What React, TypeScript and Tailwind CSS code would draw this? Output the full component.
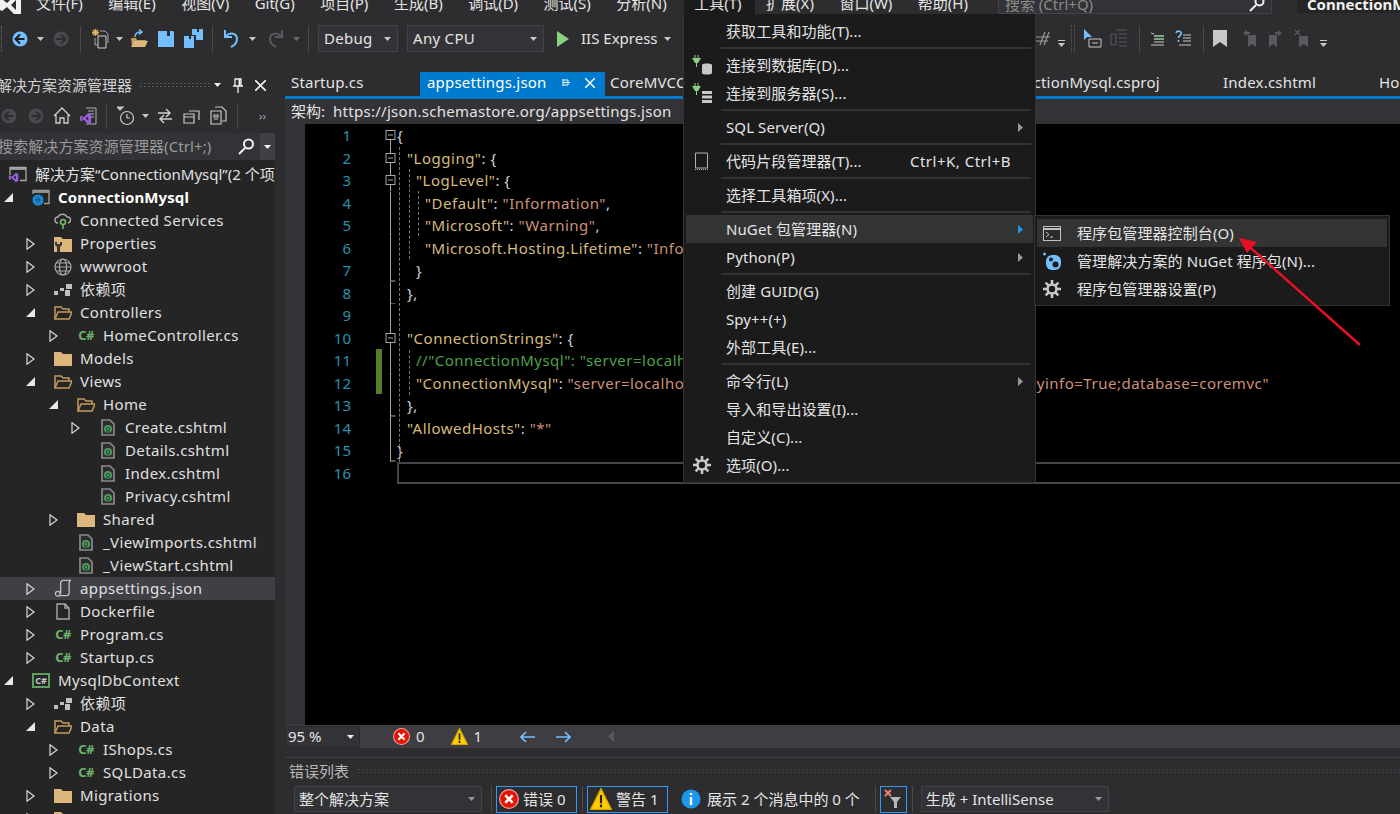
import React from "react";

const Caret = ({ c = "#c8c8c8", className = "" }: { c?: string; className?: string }) => (
  <svg width="7" height="4" viewBox="0 0 7 4" className={className}><path d="M0 0h7L3.5 4z" fill={c} /></svg>
);

const Circle = ({ dir, on }: { dir: "l" | "r"; on: boolean }) => (
  <svg width="16" height="16" viewBox="0 0 16 16">
    <circle cx="8" cy="8" r="7.5" fill={on ? "#75beff" : "#4a4a4e"} />
    <path d={dir === "l" ? "M8 3.5 3.5 8 8 12.5M4 8h8.5" : "M8 3.5 12.5 8 8 12.5M12 8H3.5"} stroke={on ? "#1e1e1e" : "#2d2d30"} strokeWidth="2" fill="none" />
  </svg>
);

const Sep = ({ className = "" }: { className?: string }) => <div className={"w-px h-[26px] bg-[#4a4a4e] shrink-0 " + className} />;

const BarCaret = ({ className = "" }: { className?: string }) => (
  <div className={"flex flex-col items-center gap-[2px] mt-[10px] shrink-0 " + className}><div className="w-[7px] h-px bg-[#c8c8c8]" /><Caret /></div>
);

const MainToolbar = () => (
  <div className="h-[58px] flex items-center pb-[9px] text-[15px] text-[#e4e4e4]">
    <div className="ml-px w-px h-[26px] border-l border-dotted border-[#6a6a6e]" />
    <div className="ml-[10px]"><Circle dir="l" on /></div>
    <Caret className="ml-[9px]" />
    <div className="ml-[9px]"><Circle dir="r" on={false} /></div>
    <Sep className="ml-[11px]" />
    <svg className="ml-[10px]" width="18" height="20" viewBox="0 0 18 20" fill="none">
      <path d="M7 7h8v12H7z" stroke="#d0d0d0" /><path d="M4 9v7h3M9 2h5l3 3v9" stroke="#a8a8a8" />
      <path d="M4.500 0v7M1 3.500h7M2 1l5 5M7 1 2 6" stroke="#e8b75d" strokeWidth="1.300" />
    </svg>
    <Caret className="ml-[7px]" />
    <svg className="ml-[7px]" width="18" height="20" viewBox="0 0 18 20">
      <path d="M1 9h5l1 2h9v1H5l-2 5h-1z" fill="#c49a5c" /><path d="M1 18l3-6h14l-3 6z" fill="#dcb67a" /><path d="M5 8c0-4 3-5 6-5M9 0.500l3 2.500-3 2.500" stroke="#75beff" strokeWidth="1.500" fill="none" />
    </svg>
    <svg className="ml-[10px]" width="16" height="16" viewBox="0 0 16 16"><path d="M0 0h15l1 1v15H0zM9 0v5h3V0z" fill="#75beff" fillRule="evenodd" /></svg>
    <svg className="ml-[10px]" width="19" height="19" viewBox="0 0 19 19" fill="#75beff" fillRule="evenodd"><path d="M0 7h10v12H0zM5 7v3h2V7z" /><path d="M8 0h11v11h-7V6H8zM13 0v3h2V0z" /></svg>
    <Sep className="ml-[9px]" />
    <svg className="ml-[10px]" width="17" height="20" viewBox="0 0 17 20" fill="none"><path d="M2 1v7h7" stroke="#75beff" strokeWidth="2" /><path d="M3 7c4-4 11-3 11 3 0 4-4 7-6 8" stroke="#75beff" strokeWidth="2" /></svg>
    <Caret className="ml-[9px]" />
    <svg className="ml-[11px]" width="17" height="20" viewBox="0 0 17 20" fill="none"><path d="M15 1v7H8" stroke="#5a5a5e" strokeWidth="2" /><path d="M14 7c-4-4-11-3-11 3 0 4 4 7 6 8" stroke="#5a5a5e" strokeWidth="2" /></svg>
    <Caret c="#6a6a6e" className="ml-[9px]" />
    <Sep className="ml-[8px]" />
    <div className="ml-[9px] w-[80px] h-[27px] bg-[#333337] border border-[#434346] flex items-center pl-[5px] tracking-[0.3px] shrink-0">
      Debug<Caret className="ml-auto mr-[6px]" />
    </div>
    <div className="ml-[9px] w-[137px] h-[27px] bg-[#333337] border border-[#434346] flex items-center pl-[5px] tracking-[0.3px] shrink-0">
      Any CPU<Caret className="ml-auto mr-[6px]" />
    </div>
    <svg className="ml-[13px]" width="12" height="16" viewBox="0 0 12 16"><path d="M0 0l12 8-12 8z" fill="#89d185" /></svg>
    <span className="ml-[12px] whitespace-nowrap">IIS Express</span>
    <Caret className="ml-[6px]" />
    <div className="w-[365px] shrink-0" />
    <svg className="shrink-0" width="14" height="18" viewBox="0 0 14 18" fill="none"><path d="M4 15 9 2M8 15l5-13M0 7h14M0 11h12" stroke="#9a9a9a" strokeWidth="1.200" /></svg>
    <BarCaret className="ml-[8px]" />
    <div className="ml-[6px] h-[28px] w-[4px] border-x border-dotted border-[#5a5a5e] shrink-0" />
    <svg className="ml-[9px] shrink-0" width="18" height="20" viewBox="0 0 18 20" fill="none"><path d="M0 0v11l3-3h5z" fill="#75beff" /><path d="M5 10h12v8H5zM8 14h6" stroke="#c8c8c8" /></svg>
    <svg className="ml-[8px] shrink-0" width="18" height="20" viewBox="0 0 18 20" fill="none" stroke="#5a5a5e"><path d="M1 5h5v11H1zM6 1h11M9 5h8M9 9h8M9 13h8M9 17h8" /></svg>
    <Sep className="ml-[11px]" />
    <svg className="ml-[11px] shrink-0" width="14" height="14" viewBox="0 0 14 14" stroke="#c8c8c8"><path d="M0 1l3 1M3 4h10M3 7h10M3 10h10M0 13h13" /><path d="M3 4h10M3 7h10" stroke="#89d185" /></svg>
    <svg className="ml-[10px] shrink-0" width="16" height="18" viewBox="0 0 16 18" fill="none"><path d="M1 3c1-3 6-2 5 1-.5 2-2.500 2-2.500 4M3.500 10v2" stroke="#75beff" strokeWidth="1.600" /><path d="M8 5h8M8 8h8M8 11h8M4 15h12" stroke="#c8c8c8" /></svg>
    <Sep className="ml-[12px]" />
    <svg className="ml-[9px] shrink-0" width="14" height="17" viewBox="0 0 14 17"><path d="M0 0h14v17l-7-5-7 5z" fill="#c8c8c8" /></svg>
    <svg className="ml-[16px] shrink-0" width="14" height="17" viewBox="0 0 14 17"><path d="M5 5h8v12l-4-3-4 3zM0 3l4-3v2h3v2H4v2z" fill="#5a5a5e" /></svg>
    <svg className="ml-[11px] shrink-0" width="14" height="17" viewBox="0 0 14 17"><path d="M1 5h8v12l-4-3-4 3zM14 3l-4-3v2H7v2h3v2z" fill="#5a5a5e" /></svg>
    <svg className="ml-[13px] shrink-0" width="14" height="17" viewBox="0 0 14 17"><path d="M4 6h9v11l-4-3-5 3z" fill="#5a5a5e" /><path d="M0 0l5 5M5 0 0 5" stroke="#7a7a7e" /></svg>
    <BarCaret className="ml-[11px]" />
  </div>
);

const VSMark = ({ size = 14 }: { size?: number }) => (
  <svg width={size} height={size} viewBox="0 0 14 14">
    <path d="M10 1 5 6 2.5 4 1 5v4l1.5 1L5 8l5 5 3-1.500V2.500zM10 4.500v5L7 7zM2.500 6l1.500 1-1.500 1z" fill="#9b5fe0" fillRule="evenodd" />
  </svg>
);

const MenuBar = () => (
  <div className="h-[14px] overflow-hidden flex relative">
    <svg className="absolute left-0 -top-[6px]" width="22" height="22" viewBox="0 0 22 22"><path d="M16 0 7 9 2 5 0 6v10l2 1 5-4 9 9 5-2V2zM16 6v10l-5-5z" fill="#f1f1f1" fillRule="evenodd" /></svg>
    <div className="h-[20px] -mt-[7px] ml-[36px] flex items-center gap-[25.5px] text-[15px] text-[#e4e4e4] whitespace-nowrap">
      <span>文件(F)</span><span>编辑(E)</span><span>视图(V)</span><span>Git(G)</span><span>项目(P)</span><span>生成(B)</span><span>调试(D)</span><span>测试(S)</span><span>分析(N)</span>
      <span className="relative bg-[#1b1b1c] pl-[10px] pr-[13px] -ml-[8px] -mr-[14px] h-[21px] leading-[20px] z-10">工具(T)</span>
      <span>扩展(X)</span><span>窗口(W)</span><span>帮助(H)</span>
    </div>
    <div className="ml-[30px] w-[274px] h-[20px] -mt-[6px] bg-[#333337] border border-[#434346] flex items-center pl-[6px] text-[15px] text-[#8a8a8a] shrink-0">
      搜索 (Ctrl+Q)
      <svg className="ml-auto mr-[6px]" width="16" height="16" viewBox="0 0 16 16" fill="none" stroke="#f1f1f1" strokeWidth="2"><circle cx="10.500" cy="5.500" r="4" /><path d="M7 9l-6 6" /></svg>
    </div>
    <div className="ml-[25px] flex-1 h-[20px] -mt-[7px] bg-[#252526] pl-[10px] font-bold text-[15px] text-[#f1f1f1] whitespace-nowrap overflow-hidden">ConnectionMysql</div>
  </div>
);

const CollapsedCh = () => <svg width="9" height="12" viewBox="0 0 9 12"><path d="M1 .8 8 6l-7 5.200z" fill="none" stroke="#d8d8d8" strokeWidth="1.200" /></svg>;
const OpenCh = () => <svg width="9" height="9" viewBox="0 0 9 9"><path d="M9 0v9H0z" fill="#e8e8e8" /></svg>;

const FolderC = () => <svg width="18" height="15" viewBox="0 0 18 15"><path d="M0 1h7l2 2h9v12H0z" fill="#dcb67a" /></svg>;
const FolderO = () => <svg width="18" height="15" viewBox="0 0 18 15" fill="none"><path d="M1 14V2h6l2 2h6v3" stroke="#c49a5c" strokeWidth="1.500" /><path d="M1 14 4 7h14l-3 7z" fill="#252526" stroke="#c49a5c" strokeWidth="1.500" /></svg>;
const CS = () => <span className="text-[13px] leading-none font-bold text-[#6db36d] whitespace-nowrap -tracking-[0.5px]">C#</span>;
const Razor = () => (
  <svg width="14" height="17" viewBox="0 0 14 17" fill="none">
    <path d="M1 1h8l4 4v11H1z" fill="#2d2d30" stroke="#8a8a8a" strokeWidth="1.700" />
    <circle cx="7" cy="10" r="4" fill="#4f9a5f" />
    <circle cx="7" cy="10" r="1.700" stroke="#1e4d2b" />
    <path d="M9 13h-4" stroke="#1e4d2b" />
  </svg>
);
const Deps = () => <svg width="18" height="12" viewBox="0 0 18 12" fill="#c0c0c0"><path d="M0 7h4v4H0zM6 4h4v3H6zM12 0h6v5h-6zM11 6h5v6h-5z" /></svg>;
const Globe = () => <svg width="18" height="18" viewBox="0 0 18 18" fill="none" stroke="#a8a8a8" strokeWidth="1.200"><circle cx="9" cy="9" r="8" /><ellipse cx="9" cy="9" rx="3.500" ry="8" /><path d="M1 9h16M2 5h14M2 13h14" /></svg>;
const Cloud = () => <svg width="18" height="18" viewBox="0 0 18 18" fill="none"><path d="M4 11a3 3 0 0 1 0-6 5 5 0 0 1 9 0 3 3 0 0 1 1 6" stroke="#a8a8a8" strokeWidth="1.400" /><circle cx="9" cy="10" r="2.500" stroke="#7cba6e" strokeWidth="1.500" /><path d="M9 12v5" stroke="#7cba6e" strokeWidth="1.500" /></svg>;
const Props = () => <svg width="18" height="16" viewBox="0 0 18 16"><path d="M0 1h7l2 2h9v13H0z" fill="#dcb67a" /><path d="M1 6h7v3L6 11v5H3v-5L1 9z" fill="#3a3a3a" /><path d="M3 5h3v3H3z" fill="#dcb67a" /></svg>;
const Json = () => <svg width="19" height="19" viewBox="0 0 19 19" fill="none" stroke="#c0c0c0" strokeWidth="1.400"><path d="M7 15V4c0-2 1-3 3-3h8c-1.500 0-2 1-2 3v10c0 2-1 3-3 3H6" /><circle cx="4" cy="15" r="2.500" /></svg>;
const Doc = () => <svg width="14" height="17" viewBox="0 0 14 17" fill="none" stroke="#a8a8a8" strokeWidth="1.400"><path d="M1 1h8l4 4v11H1zM9 1v4h4" /></svg>;
const Proj = () => (
  <svg width="18" height="17" viewBox="0 0 18 17" fill="none"><path d="M1 5V1.500h16v13h-5" stroke="#9a9a9a" strokeWidth="1.400" /><path d="M1 3h16" stroke="#9a9a9a" strokeWidth="1.800" /><circle cx="6" cy="11" r="5.500" fill="#1c97ea" /><path d="M1 11h10M6 6v10M3 7c2 2 2 6 0 8M9 7c-2 2-2 6 0 8" stroke="#14507f" strokeWidth=".8" /></svg>
);
const Sln = () => (
  <div className="relative w-[18px] h-[17px]">
    <svg width="18" height="17" viewBox="0 0 18 17" fill="none" className="absolute inset-0"><path d="M1 9V1.500h16v13h-6" stroke="#a8a8a8" strokeWidth="1.300" /><path d="M1 3h16" stroke="#a8a8a8" strokeWidth="1.800" /></svg>
    <div className="absolute -left-[1px] top-[6px]"><VSMark size={11} /></div>
  </div>
);
const CsProj = () => <div className="w-[18px] h-[15px] border-2 border-[#5e9e5e] flex items-center justify-center text-[9px] font-bold leading-none text-[#c8c8c8]">C#</div>;

type Row = { t: string; l: number; ch?: "c" | "o"; i: React.ReactNode; bold?: boolean; sel?: boolean };

const rows: Row[] = [
  { t: "ConnectionMysql", l: 0, ch: "o", i: <Proj />, bold: true },
  { t: "Connected Services", l: 1, i: <Cloud /> },
  { t: "Properties", l: 1, ch: "c", i: <Props /> },
  { t: "wwwroot", l: 1, ch: "c", i: <Globe /> },
  { t: "依赖项", l: 1, ch: "c", i: <Deps /> },
  { t: "Controllers", l: 1, ch: "o", i: <FolderO /> },
  { t: "HomeController.cs", l: 2, ch: "c", i: <CS /> },
  { t: "Models", l: 1, ch: "c", i: <FolderC /> },
  { t: "Views", l: 1, ch: "o", i: <FolderO /> },
  { t: "Home", l: 2, ch: "o", i: <FolderO /> },
  { t: "Create.cshtml", l: 3, ch: "c", i: <Razor /> },
  { t: "Details.cshtml", l: 3, i: <Razor /> },
  { t: "Index.cshtml", l: 3, i: <Razor /> },
  { t: "Privacy.cshtml", l: 3, i: <Razor /> },
  { t: "Shared", l: 2, ch: "c", i: <FolderC /> },
  { t: "_ViewImports.cshtml", l: 2, i: <Razor /> },
  { t: "_ViewStart.cshtml", l: 2, i: <Razor /> },
  { t: "appsettings.json", l: 1, ch: "c", i: <Json />, sel: true },
  { t: "Dockerfile", l: 1, ch: "c", i: <Doc /> },
  { t: "Program.cs", l: 1, ch: "c", i: <CS /> },
  { t: "Startup.cs", l: 1, ch: "c", i: <CS /> },
  { t: "MysqlDbContext", l: 0, ch: "o", i: <CsProj /> },
  { t: "依赖项", l: 1, ch: "c", i: <Deps /> },
  { t: "Data", l: 1, ch: "o", i: <FolderO /> },
  { t: "IShops.cs", l: 2, ch: "c", i: <CS /> },
  { t: "SQLData.cs", l: 2, ch: "c", i: <CS /> },
  { t: "Migrations", l: 1, ch: "c", i: <FolderC /> },
  { t: "CoreMVC", l: 1, ch: "c", i: <FolderC /> },
];

const indent = ["pl-0", "pl-[22px]", "pl-[45px]", "pl-[67px]"];

const Explorer = () => (
  <div className="w-[275px] shrink-0 flex flex-col overflow-hidden">
    <div className="h-[26px] flex items-center text-[15px] text-[#d0d0d0] shrink-0">
      <span className="-ml-[3px] whitespace-nowrap">解决方案资源管理器</span>
      <div className="ml-[7px] w-[72px] h-[6px] bg-[radial-gradient(#55555a_1px,transparent_1px)] bg-[length:4px_3px]" />
      <Caret c="#f1f1f1" className="ml-[3px]" />
      <svg className="ml-[12px]" width="10" height="15" viewBox="0 0 10 15" fill="none" stroke="#f1f1f1" strokeWidth="1.300"><path d="M2 1h6v7H2zM0 8h10M5 8v7" /><path d="M6.500 1v7" strokeWidth="2" /></svg>
      <svg className="ml-[12px]" width="11" height="11" viewBox="0 0 11 11" stroke="#f1f1f1" strokeWidth="1.600"><path d="M0 0l11 11M11 0 0 11" /></svg>
    </div>
    <div className="h-[35px] flex items-center shrink-0">
      <div className="ml-[1px]"><Circle dir="l" on={false} /></div>
      <div className="ml-[11px]"><Circle dir="r" on={false} /></div>
      <svg className="ml-[9px]" width="18" height="17" viewBox="0 0 18 17" fill="none" stroke="#d0d0d0" strokeWidth="1.300"><path d="M1 9l8-8 8 8M3 8v8h4v-5h4v5h4V8" /></svg>
      <div className="ml-[8px] relative w-[18px] h-[18px]">
        <svg width="18" height="18" viewBox="0 0 18 18" fill="none" stroke="#b0b0b0" className="absolute inset-0"><path d="M7 1h10v16H7M9 4h6M9 7h6M9 10h6" /></svg>
        <div className="absolute left-0 bottom-0"><VSMark size={13} /></div>
      </div>
      <Sep className="ml-[9px]" />
      <svg className="ml-[10px]" width="18" height="20" viewBox="0 0 18 20" fill="none" stroke="#c8c8c8" strokeWidth="1.200"><path d="M0 1h6L3 4z" fill="#c8c8c8" /><circle cx="10" cy="12" r="6.500" /><path d="M10 8v4h3" /></svg>
      <Caret className="ml-[7px]" />
      <svg className="ml-[8px]" width="16" height="16" viewBox="0 0 16 16" fill="none" stroke="#d0d0d0" strokeWidth="1.400"><path d="M1 5h12M9 1l4 4-4 4M15 11H3M7 7l-4 4 4 4" /></svg>
      <svg className="ml-[10px]" width="17" height="16" viewBox="0 0 17 16" fill="none" stroke="#c8c8c8" strokeWidth="1.200"><path d="M1 6h10v9H1zM1 9h10M6 3h10v9" /></svg>
      <svg className="ml-[10px]" width="17" height="19" viewBox="0 0 17 19" fill="none" stroke="#c8c8c8" strokeWidth="1.200"><path d="M5 1h7l4 4v10H12M1 5h10v13H1zM4 9h4v2H4zM4 13h4" /></svg>
      <Sep className="ml-[10px]" />
      <span className="ml-[21px] text-[#b0b0b0] text-[11px] leading-none">››</span>
    </div>
    <div className="h-[27px] bg-[#333337] flex items-center text-[15px] text-[#9a9a9a] shrink-0">
      <span className="-ml-[2px] whitespace-nowrap tracking-[0.1px]">搜索解决方案资源管理器(Ctrl+;)</span>
      <div className="ml-auto w-[38px] flex items-center justify-between h-full">
        <svg width="18" height="17" viewBox="0 0 18 17" fill="none" stroke="#f1f1f1" strokeWidth="2"><circle cx="11.500" cy="6" r="4.500" /><path d="M8 10l-6 6" /></svg>
        <div className="w-[15px] h-full bg-[#3f3f46] flex items-center justify-center"><Caret c="#f1f1f1" /></div>
      </div>
    </div>
    <div className="flex-1 pt-[3px] text-[15px] text-[#e0e0e0] bg-[#252526] overflow-hidden">
      <div className="h-[23px] flex items-center whitespace-nowrap">
        <div className="ml-[9px] w-[18px] flex justify-center"><Sln /></div>
        <span className="ml-[8px]">解决方案“ConnectionMysql”(2 个项目)</span>
      </div>
      {rows.map((r, i) => (
        <div key={i} className={"h-[23px] flex items-center whitespace-nowrap " + indent[r.l] + (r.sel ? " bg-[#3f3f46]" : "")}>
          <div className="w-4 flex justify-center shrink-0">{r.ch === "c" ? <CollapsedCh /> : r.ch === "o" ? <OpenCh /> : null}</div>
          <div className="ml-4 w-[18px] flex justify-center items-center shrink-0">{r.i}</div>
          <span className={"ml-2 " + (r.bold ? "font-bold text-white tracking-[0.1px]" : "tracking-[0.38px]")}>{r.t}</span>
        </div>
      ))}
    </div>
  </div>
);

const Tabs = () => (
  <div className="h-[24px] flex items-center text-[15px] text-[#e4e4e4] whitespace-nowrap overflow-hidden shrink-0 tracking-[0.2px]">
    <div className="w-[135px] h-full pl-[6px] shrink-0 leading-[20px]">Startup.cs</div>
    <div className="w-[185px] h-full bg-[#007acc] text-white flex items-center pl-[7px] pb-[3px] shrink-0">
      appsettings.json
      <svg className="ml-auto" width="11" height="9" viewBox="0 0 11 9" fill="none" stroke="#fff"><path d="M3 1v7M3 4.500h7M3 2h5v5H3" /></svg>
      <svg className="ml-[14px] mr-[10px]" width="10" height="10" viewBox="0 0 10 10" stroke="#fff" strokeWidth="1.500"><path d="M0 0l10 10M10 0 0 10" /></svg>
    </div>
    <div className="w-[378px] h-full pl-[5px] shrink-0 leading-[20px]">CoreMVCContext.cs</div>
    <div className="w-[232px] h-full pl-[4px] shrink-0 leading-[20px]">ConnectionMysql.csproj</div>
    <div className="w-[164px] h-full pl-[8px] shrink-0 leading-[20px]">Index.cshtml</div>
    <div className="h-full shrink-0 leading-[20px]">HomeController.cs</div>
  </div>
);

type Tok = [string, string];
const K = "text-[#d7ba7d]", S = "text-[#ce9178]", P = "text-[#c8d4dc]", G = "text-[#4ea24a]";
type Line = { pl: string; toks: Tok[]; fold: "box" | "line" | "linetick" | "none" };
const lines: Line[] = [
  { pl: "pl-0", toks: [["{", P]], fold: "box" },
  { pl: "pl-[10px]", toks: [['"Logging"', K], [": {", P]], fold: "box" },
  { pl: "pl-[19px]", toks: [['"LogLevel"', K], [": {", P]], fold: "box" },
  { pl: "pl-[28px]", toks: [['"Default"', K], [": ", P], ['"Information"', S], [",", P]], fold: "line" },
  { pl: "pl-[28px]", toks: [['"Microsoft"', K], [": ", P], ['"Warning"', S], [",", P]], fold: "line" },
  { pl: "pl-[28px]", toks: [['"Microsoft.Hosting.Lifetime"', K], [": ", P], ['"Information"', S]], fold: "line" },
  { pl: "pl-[19px]", toks: [["}", P]], fold: "linetick" },
  { pl: "pl-[10px]", toks: [["},", P]], fold: "linetick" },
  { pl: "pl-0", toks: [["", P]], fold: "line" },
  { pl: "pl-[10px]", toks: [['"ConnectionStrings"', K], [": {", P]], fold: "box" },
  { pl: "pl-[19px]", toks: [['//"ConnectionMysql": "server=localhost;port=3306;user=root;password=1234567",', G]], fold: "line" },
  { pl: "pl-[19px]", toks: [['"ConnectionMysql"', K], [": ", P], ['"server=localhost;port=3306;user=root;pwd=123;persistsecurityinfo=True;database=coremvc"', S]], fold: "line" },
  { pl: "pl-[10px]", toks: [["},", P]], fold: "linetick" },
  { pl: "pl-[10px]", toks: [['"AllowedHosts"', K], [": ", P], ['"*"', S]], fold: "line" },
  { pl: "pl-0", toks: [["}", P]], fold: "linetick" },
  { pl: "pl-0", toks: [["", P]], fold: "none" },
];

const Fold = ({ f, first }: { f: Line["fold"]; first: boolean }) => (
  <svg width="15" height="22.500" viewBox="0 0 15 22.500" fill="none" stroke="#a8a8a8">
    {f !== "none" && f !== "box" && <path d="M8.500 0v22.500" />}
    {f === "box" && !first && <path d="M8.500 0v6M8.500 16v6.500" />}
    {f === "box" && first && <path d="M8.500 16v6.500" />}
    {f === "box" && <><rect x="4" y="6.500" width="9" height="9" /><path d="M6 11h5" /></>}
    {f === "linetick" && <path d="M8.500 22h5" />}
  </svg>
);

const Editor = () => (
  <div className="flex-1 bg-black flex overflow-hidden relative">
    <div className="w-[20px] bg-[#333337] shrink-0" />
    <div className="flex-1 min-w-0 text-[15px] leading-[22px] whitespace-nowrap relative">
      <div className="absolute left-[94px] top-[23px] h-[315px] border-l border-dashed border-[#777]" />
      <div className="absolute left-[104px] top-[45px] h-[90px] border-l border-dashed border-[#777]" />
      <div className="absolute left-[113px] top-[67px] h-[45px] border-l border-dashed border-[#777]" />
      <div className="absolute left-[104px] top-[226px] h-[45px] border-l border-dashed border-[#777]" />
      {lines.map((l, i) => (
        <div key={i} className={"h-[22.5px] flex " + (i === 15 ? "relative" : "")}>
          <div className="w-[46px] text-right text-[#2b91af] shrink-0">{i + 1}</div>
          <div className="ml-[25px] w-[6px] shrink-0">{(i === 10 || i === 11) && <div className="h-full bg-[#587c2c]" />}</div>
          <div className="w-[15px] shrink-0"><Fold f={l.fold} first={i === 0} /></div>
          <div className={"flex-1 tracking-[0.5px] " + l.pl}>
            {l.toks.map((t, j) => <span key={j} className={t[1]}>{t[0]}</span>)}
          </div>
          {i === 15 && <div className="absolute left-[92px] right-0 top-0 h-[22px] border-2 border-r-0 border-[#46464a]" />}
        </div>
      ))}
    </div>
  </div>
);

const ErrX = ({ s = 16 }: { s?: number }) => (
  <svg width={s} height={s} viewBox="0 0 16 16"><circle cx="8" cy="8" r="7.500" fill="#e51400" stroke="#f0a0a0" /><path d="M5 5l6 6M11 5l-6 6" stroke="#fff" strokeWidth="2" /></svg>
);
const Warn = ({ s = 16 }: { s?: number }) => (
  <svg width={s} height={s} viewBox="0 0 16 16"><path d="M8 0.500 15.500 15.500H.5z" fill="#ffcc00" stroke="#d8a800" /><path d="M8 5v6M8 12v2" stroke="#222" strokeWidth="1.600" /></svg>
);
const Arrow = ({ d }: { d: "l" | "r" }) => (
  <svg width="15" height="12" viewBox="0 0 15 12" fill="none" stroke="#75beff" strokeWidth="1.600"><path d={d === "l" ? "M6 1 1 6l5 5M1 6h14" : "M9 1l5 5-5 5M14 6H0"} /></svg>
);

const StatusBar = () => (
  <div className="h-[23px] bg-[#3e3e42] flex items-center text-[15px] text-[#e4e4e4] shrink-0">
    <div className="w-[75px] h-[22px] bg-[#333337] border border-[#2a2a2c] flex items-center pl-[2px]">95 %<Caret c="#f1f1f1" className="ml-auto mr-[5px]" /></div>
    <div className="ml-[33px]"><ErrX s={17} /></div>
    <span className="ml-[6px]">0</span>
    <div className="ml-[26px]"><Warn s={17} /></div>
    <span className="ml-[6px]">1</span>
    <div className="ml-[38px]"><Arrow d="l" /></div>
    <div className="ml-[21px]"><Arrow d="r" /></div>
    <svg className="ml-[37px]" width="6" height="11" viewBox="0 0 6 11"><path d="M6 0v11L0 5.500z" fill="#5a5a5e" /></svg>
  </div>
);

const ErrorList = () => (
  <div className="h-[57px] border-t border-[#3f3f46] text-[15px] text-[#e4e4e4] shrink-0 overflow-hidden">
    <div className="h-[27px] flex items-center pl-[4px] pb-px text-[#b8b8b8] whitespace-nowrap">
      错误列表
      <div className="ml-[8px] flex-1 h-[6px] bg-[radial-gradient(#46464a_1px,transparent_1px)] bg-[length:4px_3px]" />
    </div>
    <div className="h-[28px] flex items-center whitespace-nowrap">
      <div className="ml-[9px] w-[188px] h-[26px] bg-[#333337] border border-[#434346] flex items-center pl-[4px]">整个解决方案<Caret c="#999" className="ml-auto mr-[6px]" /></div>
      <Sep className="ml-[9px] h-[22px]" />
      <div className="ml-[4px] w-[81px] h-[27px] border border-[#3399ff] flex items-center pl-[2px] gap-[4px]"><ErrX s={20} />错误 0</div>
      <Sep className="ml-[5px] h-[22px]" />
      <div className="ml-[4px] w-[81px] h-[27px] border border-[#3399ff] flex items-center pl-[2px] gap-[4px]"><Warn s={22} />警告 1</div>
      <svg className="ml-[13px]" width="20" height="20" viewBox="0 0 20 20"><circle cx="10" cy="10" r="9.500" fill="#1c97ea" /><path d="M10 4v2M10 8v8" stroke="#fff" strokeWidth="2.400" /></svg>
      <span className="ml-[6px]">展示 2 个消息中的 0 个</span>
      <Sep className="ml-[15px] h-[22px]" />
      <div className="ml-[4px] w-[27px] h-[27px] border border-[#3399ff] flex items-center justify-center">
        <svg width="18" height="20" viewBox="0 0 18 20"><path d="M1 1l6 6M7 1 1 7" stroke="#f0806e" strokeWidth="2" /><path d="M6 8h11l-4 5v6h-3v-6z" fill="#b8b8b8" /></svg>
      </div>
      <Sep className="ml-[5px] h-[22px]" />
      <div className="ml-[8px] w-[188px] h-[26px] bg-[#333337] border border-[#434346] flex items-center pl-[4px]">生成 + IntelliSense<Caret c="#999" className="ml-auto mr-[6px]" /></div>
    </div>
  </div>
);

const MenuRow = ({ t, sc, icon, sub, hot }: { t: string; sc?: string; icon?: React.ReactNode; sub?: boolean; hot?: boolean }) => (
  <div className={"h-[28px] flex items-center mx-[2px] " + (hot ? "bg-[#333334]" : "")}>
    <div className="w-[31px] flex justify-center shrink-0">{icon}</div>
    <span className="ml-[9px] whitespace-nowrap tracking-[0.1px]">{t}</span>
    {sc && <span className="ml-auto mr-[22px] whitespace-nowrap tracking-[0.5px]">{sc}</span>}
    {sub && <svg className="ml-auto mr-[10px]" width="5" height="9" viewBox="0 0 5 9"><path d="M0 0l5 4.500L0 9z" fill={hot ? "#1c97ea" : "#999"} /></svg>}
  </div>
);
const MSep = () => <div className="h-[6px] flex items-center ml-[37px] mr-[4px]"><div className="h-[2px] w-full bg-[#333337]" /></div>;

const Plug = () => <svg className="absolute left-0 top-0" width="9" height="12" viewBox="0 0 9 12"><path d="M3 0v3M6 0v3" stroke="#89d185" /><path d="M0 3h9L6 8H3z" fill="#89d185" /><path d="M4.500 8v4" stroke="#89d185" /></svg>;
const Gear = ({ s = 18 }: { s?: number }) => (
  <svg width={s} height={s} viewBox="0 0 18 18" fill="none" stroke="#c8c8c8"><circle cx="9" cy="9" r="4.500" strokeWidth="2.600" /><path d="M9 0v4M9 14v4M0 9h4M14 9h4M2.600 2.600l2.800 2.800M12.600 12.600l2.800 2.800M15.400 2.600l-2.800 2.800M5.400 12.600l-2.800 2.800" strokeWidth="2.600" /></svg>
);

const ToolsMenu = () => (
  <div className="absolute left-[683px] top-[14px] w-[353px] h-[469px] bg-[#1b1b1c] border border-[#333337] border-t-0 pt-[3px] text-[15px] text-[#e4e4e4]">
    <MenuRow t="获取工具和功能(T)..." />
    <MSep />
    <MenuRow t="连接到数据库(D)..." icon={<div className="relative w-[20px] h-[20px]"><Plug /><svg className="absolute right-0 bottom-0" width="10" height="12" viewBox="0 0 10 12"><path d="M0 2c0-2 10-2 10 0v8c0 2-10 2-10 0z" fill="#c8c8c8" /></svg></div>} />
    <MenuRow t="连接到服务器(S)..." icon={<div className="relative w-[20px] h-[20px]"><Plug /><svg className="absolute right-0 bottom-0" width="10" height="12" viewBox="0 0 10 12" fill="#c8c8c8"><path d="M0 0h10v3H0zM0 4.500h10v3H0zM0 9h10v3H0z" /></svg></div>} />
    <MSep />
    <MenuRow t="SQL Server(Q)" sub />
    <MSep />
    <MenuRow t="代码片段管理器(T)..." sc="Ctrl+K, Ctrl+B" icon={<svg width="15" height="18" viewBox="0 0 15 18" fill="none" stroke="#b0b0b0"><path d="M1.500 1h12v15h-12z" /><path d="M1 17.500h13" strokeDasharray="1 1" /></svg>} />
    <MSep />
    <MenuRow t="选择工具箱项(X)..." />
    <MSep />
    <MenuRow t="NuGet 包管理器(N)" sub hot />
    <MenuRow t="Python(P)" sub />
    <MSep />
    <MenuRow t="创建 GUID(G)" />
    <MenuRow t="Spy++(+)" />
    <MenuRow t="外部工具(E)..." />
    <MSep />
    <MenuRow t="命令行(L)" sub />
    <MenuRow t="导入和导出设置(I)..." />
    <MenuRow t="自定义(C)..." />
    <MenuRow t="选项(O)..." icon={<Gear />} />
  </div>
);

const SubRow = ({ t, icon, hot }: { t: string; icon: React.ReactNode; hot?: boolean }) => (
  <div className={"h-[28px] flex items-center " + (hot ? "bg-[#333334]" : "")}>
    <div className="w-[30px] flex justify-center shrink-0">{icon}</div>
    <span className="ml-[10px] whitespace-nowrap tracking-[0.1px]">{t}</span>
  </div>
);

const SubMenu = () => (
  <div className="absolute left-[1034px] top-[215px] w-[356px] h-[91px] bg-[#1b1b1c] border border-[#333337] px-[2px] py-[3px] text-[15px] text-[#e4e4e4]">
    <SubRow hot t="程序包管理器控制台(O)" icon={<svg width="18" height="15" viewBox="0 0 18 15" fill="none"><rect x=".5" y=".5" width="17" height="14" fill="#2a2a2c" stroke="#c0c0c0" /><path d="M1 3h16" stroke="#c0c0c0" strokeWidth="2" /><path d="M3 6l3 2.500L3 11M7 11h3" stroke="#c8c8c8" /></svg>} />
    <SubRow t="管理解决方案的 NuGet 程序包(N)..." icon={<svg width="18" height="18" viewBox="0 0 18 18"><circle cx="1.500" cy="2" r="1.500" fill="#75beff" /><rect x="3" y="3" width="15" height="15" rx="6" fill="#75beff" /><circle cx="8" cy="7.500" r="2" fill="#1b1b1c" /><circle cx="12.500" cy="12.500" r="3" fill="#1b1b1c" /></svg>} />
    <SubRow t="程序包管理器设置(P)" icon={<Gear />} />
  </div>
);

const RedArrow = () => (
  <svg className="absolute left-[1230px] top-[230px]" width="140" height="125" viewBox="0 0 140 125" fill="none">
    <path d="M130 115 14 12" stroke="#e81123" strokeWidth="2.500" />
    <path d="M9 8l18 4-10 11z" fill="#e81123" />
  </svg>
);

export default function App() {
  return (
    <div className="relative w-[1400px] h-[814px] overflow-hidden bg-[#2d2d30] flex flex-col [font-family:'Noto_Sans','Noto_Sans_CJK_SC',sans-serif]">
      <MenuBar />
      <MainToolbar />
      <div className="flex-1 flex min-h-0">
        <Explorer />
        <div className="w-[10px] shrink-0" />
        <div className="flex-1 min-w-0 flex flex-col">
          <Tabs />
          <div className="h-[3px] bg-[#007acc] shrink-0" />
          <div className="h-[25px] bg-[#333337] flex items-center text-[15px] text-[#e4e4e4] whitespace-nowrap shrink-0 overflow-hidden">
            <span className="ml-[6px]">架构:</span>
            <span className="ml-[8px] tracking-[0.28px]">https://json.schemastore.org/appsettings.json</span>
          </div>
          <Editor />
          <StatusBar />
          <div className="h-[9px] shrink-0" />
          <ErrorList />
        </div>
      </div>
      <ToolsMenu />
      <SubMenu />
      <RedArrow />
    </div>
  );
}
